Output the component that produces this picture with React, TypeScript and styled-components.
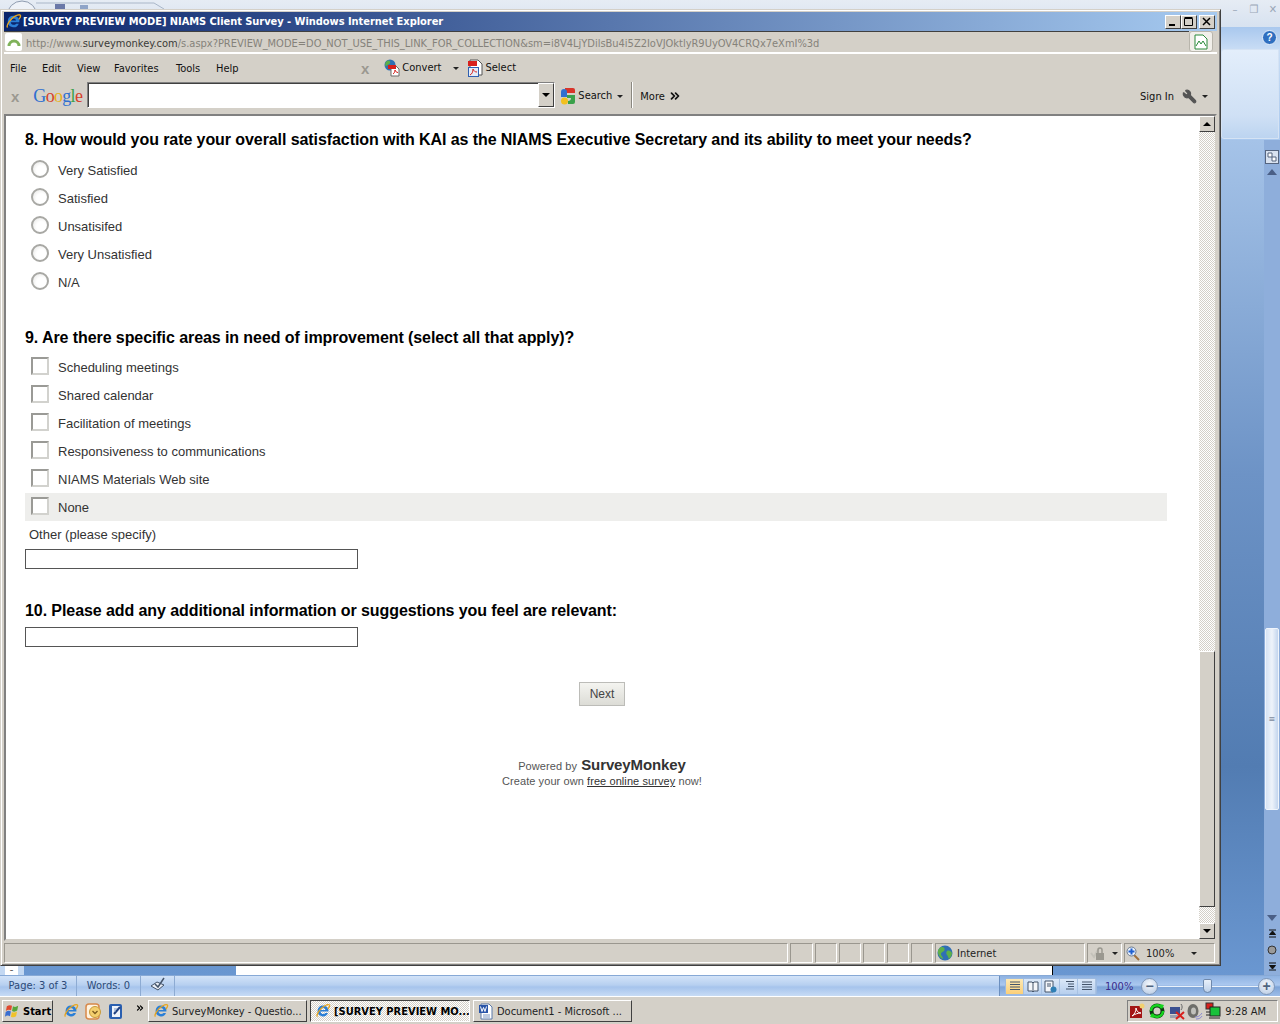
import React from 'react';
import styled, {createGlobalStyle} from 'styled-components';
import {ChevronsRight, Wrench} from 'lucide-react';

const GlobalStyle = createGlobalStyle`
    html, body {
        margin: 0;
        padding: 0;
        background: #d4d0c8;
    }
    * {
        box-sizing: border-box;
    }
`

const UI_FONT = `"DejaVu Sans Condensed", "DejaVu Sans", sans-serif`;
const PAGE_FONT = `"Liberation Sans", Arial, sans-serif`;

const Desktop = styled.div`
    position: relative;
    width: 1280px;
    height: 1024px;
    overflow: hidden;
    display: flex;
    flex-direction: column;
    font-family: ${UI_FONT};
`
const Spacer = styled.span<{w?: number; h?: number}>`
    display: block;
    flex: none;
    width: ${({w}) => w ?? 0}px;
    height: ${({h}) => h ?? 0}px;
`

/* word window behind everything */
const WordTop = styled.div`
    height: 27px;
    flex: none;
    background: linear-gradient(#e6ecf4, #d7e2f0);
    display: flex;
    align-items: flex-start;
    gap: 9px;
    padding-right: 2px;
`
const WordCtl = styled.span<{first?: boolean}>`
    width: 10px;
    height: 9px;
    margin: 5px 0 0 ${({first}) => (first ? 'auto' : '0')};
    color: #9aa7b8;
    font-size: 11px;
    line-height: 9px;
    text-align: center;
`
const WordRibbon = styled.div`
    height: 113px;
    flex: none;
    background: linear-gradient(#a9c8ee, #c9ddf5 20%, #a9c8ee);
    display: flex;
    flex-direction: column;
    align-items: flex-end;
    padding-right: 1px;
`
const HelpDot = styled.div`
    width: 15px;
    height: 15px;
    border-radius: 50%;
    margin: 3px 2px 4px 0;
    background: #2f6fc0;
    border: 1px solid #e6f0fb;
    color: #fff;
    font: bold 10px/13px ${PAGE_FONT};
    text-align: center;
`
const RibbonPanel = styled.div`
    width: 58px;
    height: 90px;
    border-radius: 3px 0 0 3px;
    background: linear-gradient(#e3eefb, #cfe0f5 75%, #bcd4f0);
    border: 1px solid #d5e3f4;
`
const WorkArea = styled.div`
    flex: 1;
    display: flex;
    background: linear-gradient(#a5c3e8, #6d93c6 40%, #527cb2 75%, #6a97d1);
`
const WorkLeft = styled.div`
    flex: 1;
    display: flex;
    align-items: flex-end;
`
const RulerCorner = styled.div`
    width: 24px;
    height: 9px;
    margin-right: 212px;
    background: #c3d8f2;
    padding-left: 5px;
    flex: none;
`
const RulerTab = styled.div`
    width: 13px;
    height: 9px;
    background: #fff;
    color: #222;
    font-size: 8px;
    line-height: 9px;
    text-align: center;
`
const PageEdge = styled.div`
    width: 817px;
    height: 9px;
    background: #fff;
    border-right: 1px solid #000;
`
const WordScroll = styled.div`
    width: 16px;
    flex: none;
    background: #8eaedb;
    display: flex;
    flex-direction: column;
    align-items: center;
    color: #222;
`
const WordScrollBtn = styled.div<{h: number}>`
    width: 16px;
    height: ${({h}) => h}px;
    flex: none;
    display: flex;
    align-items: center;
    justify-content: center;
`
const WordThumb = styled.div`
    width: 14px;
    height: 182px;
    flex: none;
    border: 1px solid #f0f5fc;
    border-radius: 2px;
    background: linear-gradient(90deg, #d6e3f4, #eef3fa 50%, #c3d5ee);
    display: flex;
    align-items: center;
    justify-content: center;
    font-size: 9px;
    color: #7c8a9e;
`
const WordStatus = styled.div`
    height: 21px;
    flex: none;
    border-top: 1px solid #87a9d6;
    background: linear-gradient(#d3e3f8, #b7d0f0 45%, #a6c4ec 55%, #c7dbf5);
    display: flex;
    align-items: center;
    color: #2c4a78;
    font-size: 11px;
`
const StatusSeg = styled.div<{w: number}>`
    width: ${({w}) => w}px;
    height: 100%;
    flex: none;
    display: flex;
    align-items: center;
    justify-content: center;
    padding-bottom: 2px;
    border-right: 1px solid #8dabd3;
`
const WordStatusRight = styled.div`
    margin-left: auto;
    width: 281px;
    height: 100%;
    border-left: 1px solid #6b8fbf;
    background: linear-gradient(#8eb2e2, #abc8ef 45%, #7da4d8 55%, #9dbde8);
    display: flex;
    align-items: center;
    padding-left: 5px;
`
const ViewGroup = styled.div`
    display: flex;
    height: 17px;
    border-radius: 2px;
    border: 1px solid #9ebadf;
    background: linear-gradient(#dbe8f8, #b7cfee);
`
const ViewBtn = styled.div<{on?: boolean}>`
    width: 18px;
    display: flex;
    align-items: center;
    justify-content: center;
    border-right: 1px solid #a8c2e3;
    background: ${({on}) => (on ? 'linear-gradient(#fde9b5, #fbcf78)' : 'transparent')};
`
const ZoomPct = styled.span`
    color: #3a2a8a;
    margin-left: 8px;
    width: 36px;
`
const RoundBtn = styled.div`
    width: 17px;
    height: 17px;
    flex: none;
    border-radius: 50%;
    border: 1px solid #7f97b8;
    background: radial-gradient(circle at 50% 35%, #f4f8fd, #b3c7e2);
    color: #4f6480;
    font: bold 14px/14px ${PAGE_FONT};
    text-align: center;
`
const ZoomTrack = styled.div`
    position: relative;
    width: 100px;
    height: 1px;
    background: #e9f1fb;
`
const ZoomThumb = styled.div`
    position: absolute;
    left: 45px;
    top: -7px;
    width: 9px;
    height: 14px;
    border: 1px solid #6f88aa;
    border-radius: 2px 2px 5px 5px;
    background: linear-gradient(#e9f0fa, #bcd0ea);
`

/* taskbar */
const Taskbar = styled.div`
    height: 28px;
    flex: none;
    background: #d4d0c8;
    border-top: 1px solid #fff;
    display: flex;
    align-items: center;
    padding: 1px 2px 0 2px;
    font-size: 11px;
    color: #222;
`
const StartBtn = styled.div`
    width: 51px;
    height: 22px;
    flex: none;
    display: flex;
    align-items: center;
    gap: 2px;
    padding-left: 1px;
    font: bold 11px ${UI_FONT};
    color: #000;
    background: #d4d0c8;
    border: 1px solid;
    border-color: #fff #404040 #404040 #fff;
`
const QuickLaunch = styled.div`
    display: flex;
    align-items: center;
    gap: 6px;
    margin-left: 10px;
    width: 85px;
    flex: none;
`
const TinyChevrons = styled(ChevronsRight)`
    margin: -6px 0 0 5px;
    flex: none;
`
const TaskBtn = styled.div<{active?: boolean}>`
    width: ${({active}) => (active ? 160 : 159)}px;
    height: 22px;
    flex: none;
    margin-right: 3px;
    display: flex;
    align-items: center;
    gap: 3px;
    padding-left: 4px;
    white-space: nowrap;
    overflow: hidden;
    font-weight: ${({active}) => (active ? 700 : 400)};
    color: ${({active}) => (active ? '#000' : '#222')};
    border: 1px solid;
    border-color: ${({active}) => (active ? '#404040 #fff #fff #404040' : '#fff #404040 #404040 #fff')};
    background: ${({active}) => (active ? 'repeating-conic-gradient(#fff 0 25%, #d4d0c8 0 50%) 0 0 / 2px 2px' : '#d4d0c8')};
`
const Tray = styled.div`
    margin-left: auto;
    width: 151px;
    height: 22px;
    flex: none;
    display: flex;
    align-items: center;
    gap: 2px;
    padding-left: 1px;
    border: 1px solid;
    border-color: #808080 #fff #fff #808080;
`
const Clock = styled.span`
    margin-left: auto;
    margin-right: 11px;
    color: #222;
`

/* IE window, sits on top of word */
const IEWindow = styled.div`
    position: absolute;
    left: 0;
    top: 9px;
    width: 1221px;
    height: 957px;
    background: #d4d0c8;
    border: 1px solid;
    border-color: #d4d0c8 #404040 #404040 #d4d0c8;
    box-shadow: inset 1px 1px 0 #fff, inset -1px -1px 0 #808080;
    padding: 2px 3px 2px 3px;
    display: flex;
    flex-direction: column;
`
const TitleBar = styled.div`
    height: 19px;
    flex: none;
    background: linear-gradient(90deg, #0a246a, #a6caf0);
    display: flex;
    align-items: center;
    padding: 0 2px 0 1px;
`
const TitleText = styled.div`
    font: bold 11px ${UI_FONT};
    letter-spacing: -0.04px;
    color: #fff;
    white-space: nowrap;
    margin-left: 1px;
`
const WinButtons = styled.div`
    margin-left: auto;
    display: flex;
`
const WinBtn = styled.div<{gap?: boolean}>`
    width: 16px;
    height: 14px;
    margin-left: ${({gap}) => (gap ? 2 : 0)}px;
    background: #d4d0c8;
    border: 1px solid;
    border-color: #fff #404040 #404040 #fff;
    display: flex;
    align-items: center;
    justify-content: center;
`
const AddressBar = styled.div`
    height: 23px;
    flex: none;
    display: flex;
    align-items: center;
    border-bottom: 2px solid #fff;
`
const AddressField = styled.div`
    flex: 1;
    height: 21px;
    border-top: 1px solid #404040;
    display: flex;
    align-items: center;
    gap: 4px;
    font-size: 11px;
    letter-spacing: -0.01px;
    color: #85827a;
    white-space: nowrap;
    overflow: hidden;
    padding: 2px 0 0 1px;
`
const AddressHost = styled.span`
    color: #3b3b38;
`
const SiteIcon = styled.div`
    width: 17px;
    height: 18px;
    flex: none;
    margin-top: -2px;
    background: #fff;
    border-radius: 2px;
    display: flex;
    align-items: center;
    justify-content: center;
`
const FeedBtn = styled.div`
    width: 24px;
    height: 21px;
    flex: none;
    margin: 0 4px 0 0;
    border: 1px solid #b8b5ac;
    border-radius: 3px;
    background: #f1efea;
    display: flex;
    align-items: center;
    justify-content: center;
`
const MenuRow = styled.div`
    height: 28px;
    flex: none;
    display: flex;
    align-items: center;
    font-size: 11px;
    color: #111;
    padding-left: 6px;
`
const MenuItem = styled.span<{w: number}>`
    width: ${({w}) => w}px;
    flex: none;
`
const GrayX = styled.span<{ml: number}>`
    font: bold 15px/15px ${PAGE_FONT};
    color: #9b9890;
    margin-left: ${({ml}) => ml}px;
    flex: none;
`
const ToolLabel = styled.span`
    margin: 0 0 2px 2px;
    flex: none;
`
const Caret = styled.span<{ml: number}>`
    width: 0;
    height: 0;
    flex: none;
    margin-left: ${({ml}) => ml}px;
    border-left: 3px solid transparent;
    border-right: 3px solid transparent;
    border-top: 3px solid #222;
`
const GoogleRow = styled.div`
    height: 31px;
    flex: none;
    display: flex;
    align-items: flex-start;
    font-size: 11px;
    color: #111;
    padding-left: 7px;
`
const GoogleCell = styled.div`
    height: 26px;
    flex: none;
    display: flex;
    align-items: center;
    padding-top: 2px;
`
const GoogleLogo = styled.span`
    font: 18px "Liberation Serif", serif;
    letter-spacing: -0.7px;
    margin-left: 14px;
    width: 54px;
    flex: none;
`
const Letter = styled.span<{c: string}>`
    color: ${({c}) => c};
`
const SearchBox = styled.div`
    width: 468px;
    height: 26px;
    flex: none;
    margin-right: 5px;
    display: flex;
    background: #fff;
    border: 1px solid;
    border-color: #808080 #fff #fff #808080;
    box-shadow: inset 1px 1px 0 #404040;
`
const SearchDrop = styled.div`
    margin-left: auto;
    width: 16px;
    height: 24px;
    background: #d4d0c8;
    border: 1px solid;
    border-color: #fff #404040 #404040 #fff;
    display: flex;
    align-items: center;
    justify-content: center;
`
const RowSep = styled.div`
    width: 2px;
    height: 26px;
    flex: none;
    margin: -2px 7px 0 8px;
    border-left: 1px solid #8a877f;
    border-right: 1px solid #fff;
`
const MoreChevrons = styled(ChevronsRight)`
    margin-left: 3px;
    flex: none;
`
const RightTools = styled.div`
    margin-left: auto;
    display: flex;
    align-items: center;
    height: 26px;
    padding: 2px 9px 0 0;
`
const ToolWrench = styled(Wrench)`
    margin: 0 3px 0 8px;
    transform: scaleX(-1);
    flex: none;
`

/* document area */
const ViewPort = styled.div`
    flex: 1;
    min-height: 0;
    display: flex;
    margin-top: 1px;
    border: 2px solid;
    border-color: #808080 #d4d0c8 #d4d0c8 #808080;
    background: #fff;
`
const Page = styled.div`
    flex: 1;
    min-width: 0;
    display: flex;
    flex-direction: column;
    padding: 14px 32px 0 19px;
    font-family: ${PAGE_FONT};
    color: #333;
`
const Question = styled.h2<{mt?: number}>`
    margin: ${({mt}) => mt ?? 0}px 0 0 0;
    height: 20px;
    font: bold 16px/20px ${PAGE_FONT};
    letter-spacing: -0.08px;
    color: #000;
    white-space: nowrap;
`
const Options = styled.div<{mt: number}>`
    margin-top: ${({mt}) => mt}px;
    display: flex;
    flex-direction: column;
`
const Option = styled.div<{hl?: boolean}>`
    height: 28px;
    display: flex;
    align-items: center;
    padding: 0 0 1px 6px;
    background: ${({hl}) => (hl ? '#eeeeec' : 'transparent')};
`
const Radio = styled.span`
    width: 18px;
    height: 18px;
    flex: none;
    margin: -2px 9px 0 0;
    border-radius: 50%;
    border: 2px solid #a8a8a4;
    background: radial-gradient(circle at 60% 60%, #fff 40%, #e2e2e0);
`
const Check = styled.span`
    width: 18px;
    height: 18px;
    flex: none;
    margin: -2px 9px 0 0;
    border: 2px solid;
    border-color: #9a9a96 #d2d2ce #d2d2ce #9a9a96;
    background: #fff;
`
const OptionText = styled.span`
    font-size: 13px;
    margin-top: 1px;
    color: #333;
`
const OtherLabel = styled.div`
    margin: 5px 0 0 4px;
    height: 18px;
    font-size: 13px;
    line-height: 18px;
`
const TextBox = styled.div<{mt: number}>`
    width: 333px;
    height: 20px;
    flex: none;
    margin-top: ${({mt}) => mt}px;
    border: 1px solid #555;
    background: #fff;
`
const NextBtn = styled.div`
    align-self: flex-start;
    width: 46px;
    height: 24px;
    margin: 35px 0 0 554px;
    border: 1px solid #bcbcb8;
    background: linear-gradient(#f4f4f0, #dcdcd6);
    font-size: 12px;
    line-height: 22px;
    text-align: center;
    color: #444;
`
const Footer = styled.div`
    width: 1154px;
    flex: none;
    margin-top: 50px;
    text-align: center;
    font-size: 11px;
    line-height: 15px;
    color: #555;
    letter-spacing: 0.08px;
`
const FooterBrand = styled.span`
    font: bold 15px ${PAGE_FONT};
    letter-spacing: -0.1px;
    color: #333;
    margin-left: 1px;
`
const FooterLink = styled.span`
    color: #333;
    text-decoration: underline;
`
const ScrollBar = styled.div`
    width: 16px;
    flex: none;
    display: flex;
    flex-direction: column;
    background: repeating-conic-gradient(#d4d0c8 0 25%, #fff 0 50%) 0 0 / 2px 2px;
`
const ScrollBtn = styled.div`
    width: 16px;
    height: 16px;
    flex: none;
    background: #d4d0c8;
    border: 1px solid;
    border-color: #fff #404040 #404040 #fff;
    display: flex;
    align-items: center;
    justify-content: center;
`
const ScrollThumb = styled.div`
    width: 16px;
    height: 256px;
    flex: none;
    margin: auto 0 16px 0;
    background: #d4d0c8;
    border: 1px solid;
    border-color: #fff #404040 #404040 #fff;
`
const Arrow = styled.span<{up?: boolean}>`
    width: 0;
    height: 0;
    border-left: 4px solid transparent;
    border-right: 4px solid transparent;
    ${({up}) => (up ? 'border-bottom: 4px solid #000;' : 'border-top: 4px solid #000;')}
`
const SlateArrow = styled.span<{up?: boolean}>`
    width: 0;
    height: 0;
    border-left: 5px solid transparent;
    border-right: 5px solid transparent;
    ${({up}) => (up ? 'border-bottom: 6px solid #4a5f86;' : 'border-top: 6px solid #4a5f86;')}
`
const StatusBar = styled.div`
    height: 20px;
    flex: none;
    margin-top: 2px;
    display: flex;
    font-size: 11px;
    color: #222;
`
const StatusCell = styled.div<{w?: number}>`
    ${({w}) => (w ? `width: ${w}px; flex: none;` : 'flex: 1;')}
    height: 20px;
    margin-right: 2px;
    display: flex;
    align-items: center;
    border: 1px solid;
    border-color: #9a978f #fff #fff #9a978f;
    padding-left: 1px;
    gap: 3px;
`
const InternetLabel = styled.span`
    margin-left: 1px;
`
const ZoomLabel = styled.span`
    margin-left: 3px;
`

const IeIcon = ({size = 16}: {size?: number}) => (
    <svg width={size} height={size} viewBox="0 0 16 16" style={{flex: 'none'}}>
        <path d="M8 2.600a5.400 5.400 0 1 0 5 7.400h-2.600a2.800 2.800 0 0 1-5-1.400H13.500A5.400 5.400 0 0 0 8 2.600zM5.500 7a2.600 2.600 0 0 1 5 0z" fill="#2b7fd6"/>
        <path d="M2.400 13.600C.8 11.800 5 5.500 9.500 3c2-1.100 4.400-1.800 5-.8.5.8-.4 2.400-1.500 3.800" fill="none" stroke="#e8a51e" strokeWidth="1.300"/>
    </svg>
)

const GlobeIcon = () => (
    <svg width="16" height="16" viewBox="0 0 16 16" style={{flex: 'none'}}>
        <circle cx="8" cy="8" r="7.500" fill="#2f6fb5"/>
        <path d="M5 2c2 0 3 1 2.500 3S4 7 4 9s2 2 2 5c-2-1-4.500-2.500-5-6S3 2 5 2zM10 6c2-1 4 0 5 2 0 2-1 4-3 6-1-2-1-3-2-4s-1-3 0-4z" fill="#5db04a"/>
    </svg>
)

const ConvertIcon = () => (
    <svg width="16" height="18" viewBox="0 0 16 18" style={{flex: 'none'}}>
        <circle cx="6" cy="6" r="5.500" fill="#2f6fb5"/>
        <path d="M3 2c2-1 4 0 3 2S2 6 2 8C.5 6 1 3 3 2z" fill="#5db04a"/>
        <path d="M7 7h5l3 3v7H7z" fill="#fff" stroke="#6a6a6a"/>
        <rect x="4" y="6" width="8" height="4" fill="#d8201c"/>
        <path d="M9 15c1.500-1 2-2.500 2-4 .5 1.500 1.500 2.500 3 2.500" fill="none" stroke="#d8201c"/>
    </svg>
)

const SelectIcon = () => (
    <svg width="16" height="18" viewBox="0 0 16 18" style={{flex: 'none'}}>
        <path d="M3 1h8l4 4v11H3z" fill="#fff" stroke="#555"/>
        <rect x="1" y="2" width="9" height="5" fill="#d8201c"/>
        <rect x="1.500" y="8.500" width="10" height="9" fill="#e4ecf8" stroke="#2f5fb0"/>
        <path d="M3 16c2-1 3-3 3-6 .8 2 2 3 4 3" fill="none" stroke="#d8201c"/>
    </svg>
)

const GoogleTile = () => (
    <svg width="16" height="18" viewBox="0 0 16 18" style={{flex: 'none'}}>
        <path d="M5 1h8a2 2 0 0 1 2 2v3H5z" fill="#d8342a"/>
        <path d="M1 5a3 3 0 0 1 6 0v5H1z" fill="#2f6fd0"/>
        <circle cx="4.500" cy="14" r="3.500" fill="#f2c01e"/>
        <path d="M7 8h8v7a2 2 0 0 1-2 2H8v-3c2 0 3-1 3-3H7z" fill="#3aa14a"/>
    </svg>
)

const WinFlag = () => (
    <svg width="17" height="16" viewBox="0 0 18 16" style={{flex: 'none'}}>
        <path d="M3 3c2-1.500 4-1.500 5.500-.5L7.500 7.500C6 6.500 4 6.500 2 8z" fill="#e0492f"/>
        <path d="M9.500 3c1.500 1 3.500 1 5.500-.5l-1 5c-2 1.500-4 1.500-5.500.5z" fill="#55a63a"/>
        <path d="M1.800 9c2-1.500 4-1.500 5.500-.5l-1 5C4.800 12.500 2.800 12.500 1 14z" fill="#3a6fd0"/>
        <path d="M8.300 9c1.500 1 3.500 1 5.500-.5l-1 5c-2 1.500-4 1.500-5.500.5z" fill="#f0c22a"/>
    </svg>
)

const OutlookIcon = () => (
    <svg width="17" height="17" viewBox="0 0 17 17" style={{flex: 'none'}}>
        <rect x="1" y="1" width="13" height="15" rx="3" fill="#fff3df" stroke="#d8894a" strokeWidth="1.500"/>
        <circle cx="10" cy="9" r="5.500" fill="#f4cf6e" stroke="#c89a3a"/>
        <path d="M7.500 8l2.500 2.500L12.500 8" fill="none" stroke="#7a5a1e" strokeWidth="1.300"/>
    </svg>
)

const NoteIcon = () => (
    <svg width="16" height="17" viewBox="0 0 16 17" style={{flex: 'none'}}>
        <rect x="1" y="1" width="13" height="15" rx="2" fill="#2a5fb0"/>
        <rect x="4" y="3" width="8" height="11" fill="#eef3fb"/>
        <path d="M6 11l6-7" stroke="#1f3f80" strokeWidth="2"/>
        <path d="M6 6h3M6 8h2" stroke="#7f97c0"/>
    </svg>
)

const WordDocIcon = () => (
    <svg width="16" height="17" viewBox="0 0 16 17" style={{flex: 'none'}}>
        <path d="M3 1h8l3 3v12H3z" fill="#fff" stroke="#5a78a8"/>
        <rect x="1" y="2" width="9" height="8" fill="#2a55a8"/>
        <path d="M2.500 3.500l1.500 5 1.500-4 1.500 4 1.500-5" fill="none" stroke="#fff"/>
        <path d="M5 12h7M5 14h7" stroke="#7f97c0"/>
    </svg>
)

const AdobeIcon = () => (
    <svg width="16" height="16" viewBox="0 0 16 16" style={{flex: 'none'}}>
        <rect x="1" y="3" width="12" height="12" fill="#a31515"/>
        <path d="M3 13c3-2 4-5 4-8 .5 3 2 5 5 5-3 0-6 1-9 3z" fill="none" stroke="#fff"/>
        <circle cx="13" cy="3" r="2.500" fill="#f2d070"/>
    </svg>
)

const SyncIcon = () => (
    <svg width="20" height="18" viewBox="0 0 18 18" style={{flex: 'none'}}>
        <circle cx="9" cy="9" r="7.500" fill="#0c3a10"/>
        <circle cx="9" cy="9" r="3.500" fill="#d4d0c8"/>
        <path d="M3 9a6 6 0 0 1 11-3M15 9a6 6 0 0 1-11 3" fill="none" stroke="#17d41f" strokeWidth="2.500"/>
        <path d="M12 2l4 1-2 4zM6 16l-4-1 2-4z" fill="#17d41f"/>
    </svg>
)

const NetOffIcon = () => (
    <svg width="16" height="17" viewBox="0 0 16 17" style={{flex: 'none'}}>
        <rect x="1" y="4" width="10" height="7" fill="#3a4f90"/>
        <rect x="1" y="12" width="10" height="3" fill="#9aa0b0"/>
        <path d="M12 1c1.500 2 1.500 4 0 6" fill="none" stroke="#666"/>
        <path d="M7 9l8 7M15 9l-8 7" stroke="#d8201c" strokeWidth="2"/>
    </svg>
)

const SpeakerIcon = () => (
    <svg width="16" height="17" viewBox="0 0 16 17" style={{flex: 'none'}}>
        <ellipse cx="6" cy="8" rx="5.500" ry="7" fill="#6e6e6a"/>
        <ellipse cx="6.500" cy="8" rx="2.500" ry="3.500" fill="#c0c0bc"/>
        <path d="M8 14c3 0 5-1 7-4M9 16c3 0 5-1 6-3" fill="none" stroke="#8a8ad0"/>
    </svg>
)

const LanIcon = () => (
    <svg width="16" height="18" viewBox="0 0 16 18" style={{flex: 'none'}}>
        <rect x="1" y="1" width="7" height="6" fill="#d8201c" stroke="#333"/>
        <rect x="5" y="5" width="10" height="9" fill="#18c23a" stroke="#222"/>
        <path d="M1 10h4M1 13h4M4 16h11" stroke="#222"/>
    </svg>
)

const Lines = () => (
    <svg width="12" height="12" viewBox="0 0 12 12">
        <path d="M1 2h10M1 4.500h10M1 7h10M1 9.500h10" stroke="#44546a"/>
    </svg>
)

const BookView = () => (
    <svg width="12" height="13" viewBox="0 0 12 13">
        <path d="M1 2h4l1 1 1-1h4v9H7l-1 1-1-1H1zM6 3v9" fill="#f4f6fa" stroke="#44546a"/>
    </svg>
)

const WebView = () => (
    <svg width="13" height="13" viewBox="0 0 13 13">
        <path d="M1 1h8v11H1z" fill="#f4f6fa" stroke="#44546a"/>
        <path d="M3 4h4M3 6h4" stroke="#44546a"/>
        <circle cx="9.500" cy="9.500" r="3" fill="#2f7fb5"/>
    </svg>
)

const OutlineView = () => (
    <svg width="12" height="12" viewBox="0 0 12 12">
        <path d="M3 1.500h8M5 4h6M5 6.500h6M3 9h8" stroke="#44546a"/>
    </svg>
)

const RulerIcon = () => (
    <svg width="14" height="14" viewBox="0 0 14 14">
        <rect x=".5" y=".5" width="13" height="13" fill="#d8e2f0" stroke="#55657f"/>
        <path d="M3 3h4v4H3zM7 7h4v4H7z" fill="#fff" stroke="#55657f"/>
    </svg>
)

const BrowseUp = () => (
    <svg width="9" height="10" viewBox="0 0 9 10">
        <path d="M1 1h7M4.500 2l3 3.500h-6zM1 8h7" stroke="#111" fill="#111"/>
    </svg>
)

const BrowseDown = () => (
    <svg width="9" height="10" viewBox="0 0 9 10">
        <path d="M1 2h7M1 9h7M4.500 8l-3-3.500h6z" stroke="#111" fill="#111"/>
    </svg>
)

const BrowseDot = () => (
    <svg width="10" height="10" viewBox="0 0 10 10">
        <circle cx="5" cy="5" r="4" fill="#9a9a9a" stroke="#333"/>
    </svg>
)

const LockZone = () => (
    <svg width="18" height="16" viewBox="0 0 16 16" style={{flex: 'none'}}>
        <path d="M1 8l3 4 5-9" fill="none" stroke="#c4c2ba" strokeWidth="2"/>
        <rect x="6" y="8" width="8" height="7" fill="#9a9890"/>
        <path d="M8 8V5a2 2 0 0 1 4 0v3" fill="none" stroke="#9a9890" strokeWidth="1.500"/>
    </svg>
)

const ZoomGlass = () => (
    <svg width="14" height="15" viewBox="0 0 14 15" style={{flex: 'none'}}>
        <path d="M8 9l5 5" stroke="#a0703a" strokeWidth="2"/>
        <circle cx="5.500" cy="5.500" r="4.500" fill="#e8f0fb" stroke="#6a7a90"/>
        <path d="M5.500 2.500v6M2.500 5.500h6" stroke="#1f5fd0" strokeWidth="2"/>
    </svg>
)

const radios = ['Very Satisfied', 'Satisfied', 'Unsatisifed', 'Very Unsatisfied', 'N/A'];
const checks = [
    'Scheduling meetings',
    'Shared calendar',
    'Facilitation of meetings',
    'Responsiveness to communications',
    'NIAMS Materials Web site',
    'None',
];

const App = () => {
    return (
        <Desktop>
            <GlobalStyle/>
            <WordTop>
                <svg width="170" height="9" viewBox="0 0 170 9" style={{flex: 'none'}}>
                    <circle cx="22" cy="16" r="15" fill="#eef2f8" stroke="#8f9cb0"/>
                    <path d="M36 3h118l10 6" fill="none" stroke="#a9b6c8"/>
                    <rect x="55" y="4" width="10" height="5" fill="#6a78a8"/>
                    <rect x="80" y="5" width="8" height="4" fill="#8fa4c8"/>
                </svg>
                <WordCtl first>–</WordCtl>
                <WordCtl>❐</WordCtl>
                <WordCtl>✕</WordCtl>
            </WordTop>
            <WordRibbon>
                <HelpDot>?</HelpDot>
                <RibbonPanel/>
            </WordRibbon>
            <WorkArea>
                <WorkLeft>
                    <RulerCorner><RulerTab>–</RulerTab></RulerCorner>
                    <PageEdge/>
                </WorkLeft>
                <WordScroll>
                    <WordScrollBtn h={9}/>
                    <WordScrollBtn h={15}><RulerIcon/></WordScrollBtn>
                    <WordScrollBtn h={16}><SlateArrow up/></WordScrollBtn>
                    <Spacer h={448}/>
                    <WordThumb>≡</WordThumb>
                    <Spacer h={100}/>
                    <WordScrollBtn h={16}><SlateArrow/></WordScrollBtn>
                    <WordScrollBtn h={16}><BrowseUp/></WordScrollBtn>
                    <WordScrollBtn h={16}><BrowseDot/></WordScrollBtn>
                    <WordScrollBtn h={16}><BrowseDown/></WordScrollBtn>
                </WordScroll>
            </WorkArea>
            <WordStatus>
                <StatusSeg w={77}>Page: 3 of 3</StatusSeg>
                <StatusSeg w={64}>Words: 0</StatusSeg>
                <StatusSeg w={34}>
                    <svg width="18" height="16" viewBox="0 0 18 16">
                        <path d="M2 9l6-4 7 3-6 5z" fill="#e9eef6" stroke="#44546a"/>
                        <path d="M6 7l3 3 6-9" fill="none" stroke="#44546a" strokeWidth="1.500"/>
                    </svg>
                </StatusSeg>
                <WordStatusRight>
                    <ViewGroup>
                        <ViewBtn on><Lines/></ViewBtn>
                        <ViewBtn><BookView/></ViewBtn>
                        <ViewBtn><WebView/></ViewBtn>
                        <ViewBtn><OutlineView/></ViewBtn>
                        <ViewBtn><Lines/></ViewBtn>
                    </ViewGroup>
                    <ZoomPct>100%</ZoomPct>
                    <RoundBtn>−</RoundBtn>
                    <ZoomTrack><ZoomThumb/></ZoomTrack>
                    <RoundBtn>+</RoundBtn>
                </WordStatusRight>
            </WordStatus>
            <Taskbar>
                <StartBtn><WinFlag/>Start</StartBtn>
                <QuickLaunch>
                    <IeIcon/>
                    <OutlookIcon/>
                    <NoteIcon/>
                    <TinyChevrons size={10} color="#000" strokeWidth={3}/>
                </QuickLaunch>
                <TaskBtn><IeIcon/>SurveyMonkey - Questio...</TaskBtn>
                <TaskBtn active><IeIcon/>[SURVEY PREVIEW MO...</TaskBtn>
                <TaskBtn><WordDocIcon/>Document1 - Microsoft ...</TaskBtn>
                <Tray>
                    <AdobeIcon/>
                    <SyncIcon/>
                    <NetOffIcon/>
                    <SpeakerIcon/>
                    <LanIcon/>
                    <Clock>9:28 AM</Clock>
                </Tray>
            </Taskbar>

            <IEWindow>
                <TitleBar>
                    <IeIcon size={17}/>
                    <TitleText>[SURVEY PREVIEW MODE] NIAMS Client Survey - Windows Internet Explorer</TitleText>
                    <WinButtons>
                        <WinBtn>
                            <svg width="10" height="9"><rect x="1" y="7" width="6" height="2" fill="#000"/></svg>
                        </WinBtn>
                        <WinBtn>
                            <svg width="10" height="9"><path d="M.5 1.500h8v7h-8zM.5 .5h8" fill="none" stroke="#000"/></svg>
                        </WinBtn>
                        <WinBtn gap>
                            <svg width="10" height="9"><path d="M1 1l7 7M8 1L1 8" stroke="#000" strokeWidth="1.500"/></svg>
                        </WinBtn>
                    </WinButtons>
                </TitleBar>
                <AddressBar>
                    <AddressField>
                        <SiteIcon>
                            <svg width="14" height="12" viewBox="0 0 14 12"><path d="M2 10a5 5 0 0 1 10 0" fill="none" stroke="#7fb25a" strokeWidth="3"/></svg>
                        </SiteIcon>
                        <span>http://www.<AddressHost>surveymonkey.com</AddressHost>/s.aspx?PREVIEW_MODE=DO_NOT_USE_THIS_LINK_FOR_COLLECTION&amp;sm=i8V4LjYDilsBu4i5Z2IoVJOktlyR9UyOV4CRQx7eXmI%3d</span>
                    </AddressField>
                    <FeedBtn>
                        <svg width="14" height="16" viewBox="0 0 14 16">
                            <path d="M1 1h8l4 4v10H1z" fill="#fff" stroke="#2a8a3a"/>
                            <path d="M2 12l3-5 2 3 2-3 3 5" fill="none" stroke="#2a8a3a"/>
                        </svg>
                    </FeedBtn>
                </AddressBar>
                <MenuRow>
                    <MenuItem w={32}>File</MenuItem>
                    <MenuItem w={35}>Edit</MenuItem>
                    <MenuItem w={37}>View</MenuItem>
                    <MenuItem w={62}>Favorites</MenuItem>
                    <MenuItem w={40}>Tools</MenuItem>
                    <MenuItem w={30}>Help</MenuItem>
                    <GrayX ml={115}>x</GrayX>
                    <Spacer w={15}/>
                    <ConvertIcon/>
                    <ToolLabel>Convert</ToolLabel>
                    <Caret ml={12}/>
                    <Spacer w={8}/>
                    <SelectIcon/>
                    <ToolLabel>Select</ToolLabel>
                </MenuRow>
                <GoogleRow>
                    <GoogleCell>
                        <GrayX ml={0}>x</GrayX>
                        <GoogleLogo>
                            <Letter c="#2f6fd0">G</Letter>
                            <Letter c="#d6402b">o</Letter>
                            <Letter c="#e8b01c">o</Letter>
                            <Letter c="#2f6fd0">g</Letter>
                            <Letter c="#3aa14a">l</Letter>
                            <Letter c="#d6402b">e</Letter>
                        </GoogleLogo>
                    </GoogleCell>
                    <SearchBox>
                        <SearchDrop><Arrow/></SearchDrop>
                    </SearchBox>
                    <GoogleCell>
                        <GoogleTile/>
                        <ToolLabel>Search</ToolLabel>
                        <Caret ml={5}/>
                        <RowSep/>
                        <span>More</span>
                        <MoreChevrons size={14} color="#111" strokeWidth={3}/>
                    </GoogleCell>
                    <RightTools>
                        <span>Sign In</span>
                        <ToolWrench size={15} color="#555" fill="#555"/>
                        <Caret ml={2}/>
                    </RightTools>
                </GoogleRow>
                <ViewPort>
                    <Page>
                        <Question>8. How would you rate your overall satisfaction with KAI as the NIAMS Executive Secretary and its ability to meet your needs?</Question>
                        <Options mt={6}>
                            {radios.map((text) => (
                                <Option key={text}>
                                    <Radio/>
                                    <OptionText>{text}</OptionText>
                                </Option>
                            ))}
                        </Options>
                        <Question mt={32}>9. Are there specific areas in need of improvement (select all that apply)?</Question>
                        <Options mt={5}>
                            {checks.map((text) => (
                                <Option key={text} hl={text === 'None'}>
                                    <Check/>
                                    <OptionText>{text}</OptionText>
                                </Option>
                            ))}
                        </Options>
                        <OtherLabel>Other (please specify)</OtherLabel>
                        <TextBox mt={5}/>
                        <Question mt={32}>10. Please add any additional information or suggestions you feel are relevant:</Question>
                        <TextBox mt={6}/>
                        <NextBtn>Next</NextBtn>
                        <Footer>
                            <div>Powered by <FooterBrand>SurveyMonkey</FooterBrand></div>
                            <div>Create your own <FooterLink>free online survey</FooterLink> now!</div>
                        </Footer>
                    </Page>
                    <ScrollBar>
                        <ScrollBtn><Arrow up/></ScrollBtn>
                        <ScrollThumb/>
                        <ScrollBtn><Arrow/></ScrollBtn>
                    </ScrollBar>
                </ViewPort>
                <StatusBar>
                    <StatusCell/>
                    <StatusCell w={23}/>
                    <StatusCell w={22}/>
                    <StatusCell w={22}/>
                    <StatusCell w={22}/>
                    <StatusCell w={22}/>
                    <StatusCell w={22}/>
                    <StatusCell w={150}><GlobeIcon/><InternetLabel>Internet</InternetLabel></StatusCell>
                    <StatusCell w={35}>
                        <LockZone/>
                        <Caret ml={2}/>
                    </StatusCell>
                    <StatusCell w={91}>
                        <ZoomGlass/>
                        <ZoomLabel>100%</ZoomLabel>
                        <Caret ml={14}/>
                    </StatusCell>
                </StatusBar>
            </IEWindow>
        </Desktop>
    );
};

export default App;
